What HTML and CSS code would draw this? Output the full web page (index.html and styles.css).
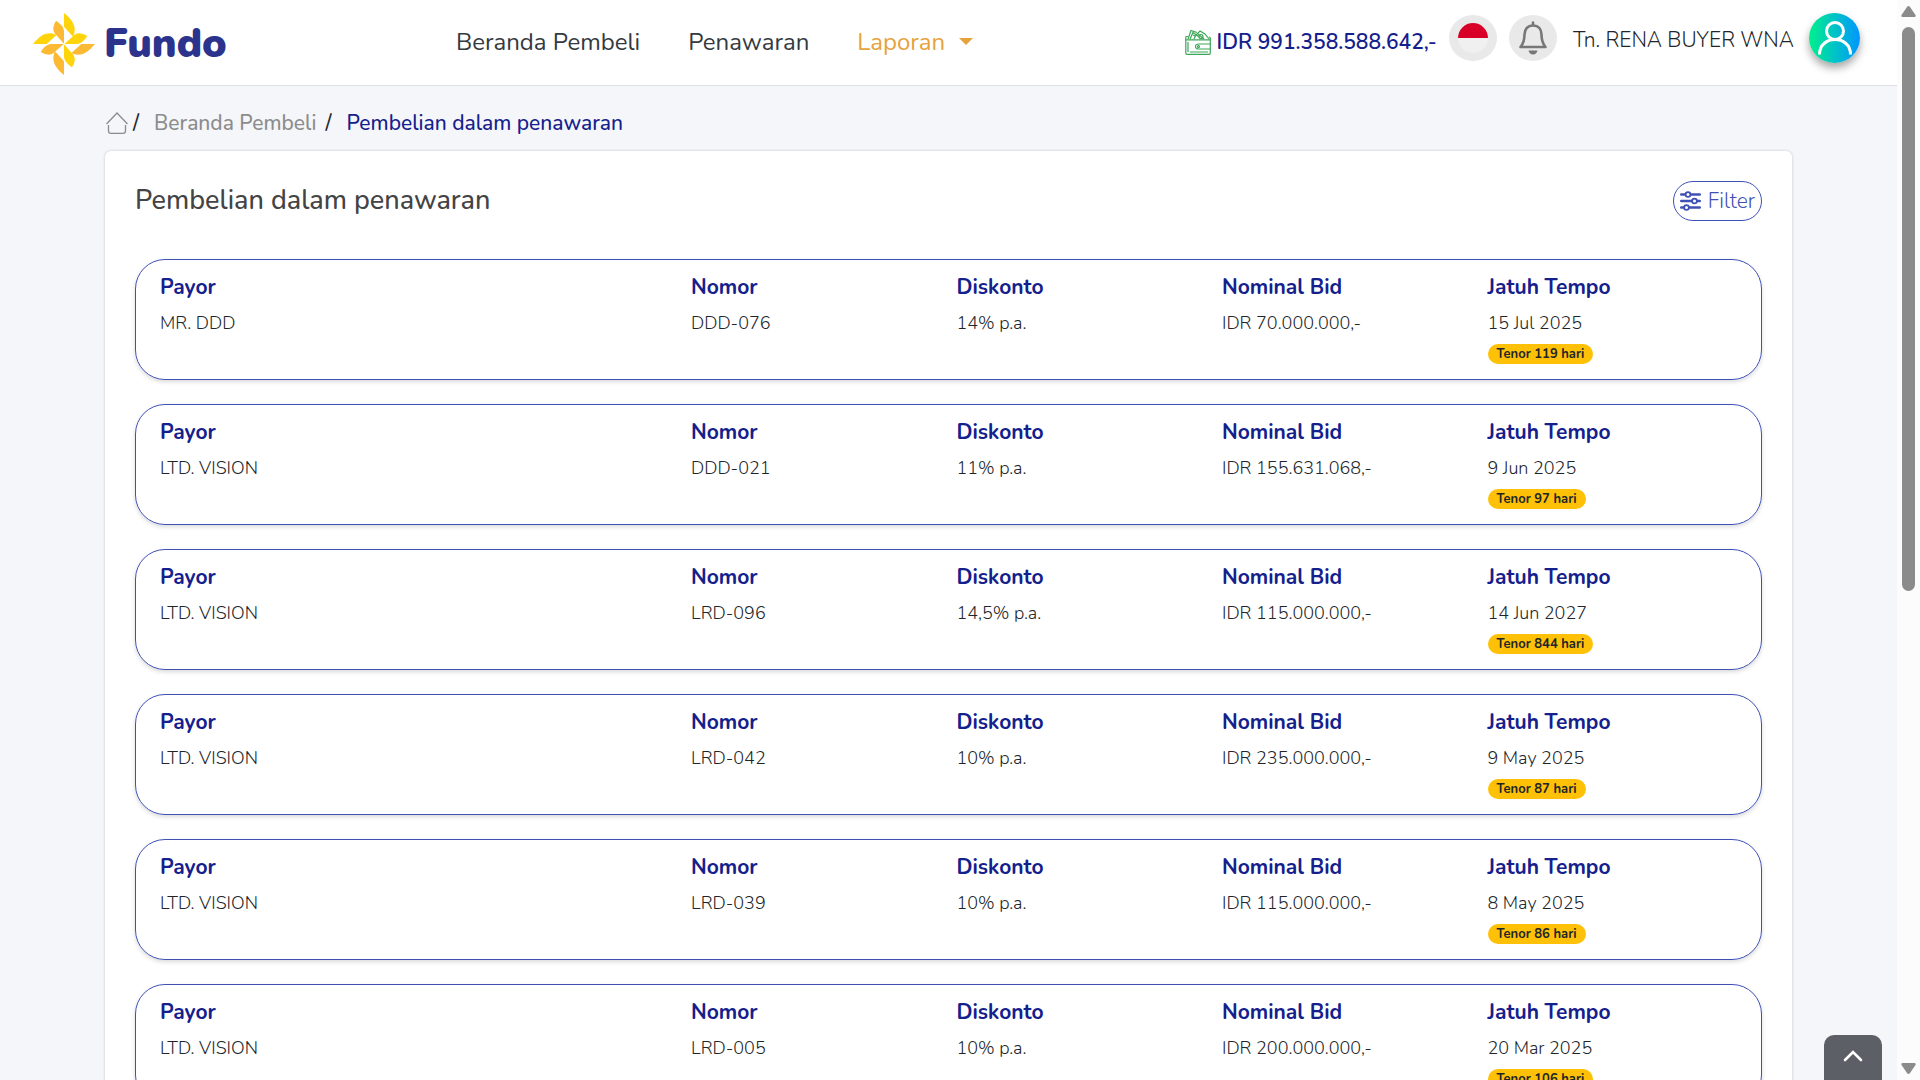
FILE: index.html
```html
<!DOCTYPE html>
<html lang="id">
<head>
<meta charset="utf-8">
<meta name="viewport" content="width=device-width, initial-scale=1">
<title>Fundo - Pembelian dalam penawaran</title>
<link rel="stylesheet" href="styles.css">
</head>
<body>
<header class="topbar">
  <a class="brand" href="#">
    <svg class="brand-mark" viewBox="-93 -93 186 186" aria-hidden="true">
      <defs>
        <path id="outer" d="M0-93C20-76 32-62 32-42Q32-30 27-22L0-52Z"/>
        <path id="inner" d="M-24-70Q-2-56 0-40V-1L-28-32Q-38-48-24-70Z"/>
      </defs>
      <g fill="#ffd40a">
        <use href="#outer"/>
        <use href="#outer" transform="rotate(-90)"/>
        <use href="#inner" transform="rotate(90)"/>
        <use href="#inner" transform="rotate(180)"/>
      </g>
      <g fill="#fbb934">
        <use href="#inner"/>
        <use href="#inner" transform="rotate(-90)"/>
        <use href="#outer" transform="rotate(90)"/>
        <use href="#outer" transform="rotate(180)"/>
      </g>
    </svg>
    <span class="brand-name">Fundo</span>
  </a>
  <nav class="menu">
    <a href="#">Beranda Pembeli</a>
    <a href="#">Penawaran</a>
    <a class="active" href="#">Laporan <span class="caret"></span></a>
  </nav>
  <div class="account">
    <a class="balance" href="#">
      <svg class="wallet" viewBox="0 0 26 26" fill="none" stroke="#3aa757" stroke-width="1.2" aria-hidden="true">
        <path d="M3 10 6 1.500 12 3.500M5 10 8 3.500 14 8M9 10 11 6 15 2 20 5 24 10M13 5 19 10M8 6l2 1"/>
        <circle cx="16" cy="7.500" r="2"/>
        <path d="M3 7.500H1.500Q.8 7.500.8 9V24Q.8 25.300 2 25.300H24Q25.300 25.300 25.300 24V9Q25.300 8 24 8M.8 10.800H25M25 15H14Q10.500 15 10.500 17.500T14 20H25M3 13v10M5 23H23"/>
        <circle cx="13.500" cy="17.500" r="1"/>
      </svg>
      <span>IDR 991.358.588.642,-</span>
    </a>
    <div class="user">
      <button class="round" type="button" aria-label="Bahasa Indonesia">
        <svg class="flag" viewBox="0 0 30 30" aria-hidden="true"><circle cx="15" cy="15" r="15" fill="#f0f0f0"/><path d="M0 15a15 15 0 0 1 30 0Z" fill="#d80027"/></svg>
      </button>
      <button class="round" type="button" aria-label="Notifikasi">
        <svg class="bell" viewBox="0 0 30 34" aria-hidden="true">
          <path d="M15 4.500C9.500 4.500 6.500 8.500 6.500 13.500C6.500 20 5 23 2.500 26H27.500C25 23 23.500 20 23.500 13.500C23.500 8.500 20.500 4.500 15 4.500ZM15 1.500V4" fill="none" stroke="#777" stroke-width="2.600" stroke-linejoin="round" stroke-linecap="round"/>
          <path d="M10.500 29.500H19.500Q18.500 33.500 15 33.500T10.500 29.500Z" fill="#777"/>
        </svg>
      </button>
      <span class="user-name">Tn. RENA BUYER WNA</span>
      <button class="avatar" type="button" aria-label="Profil">
        <svg viewBox="0 0 34 34" fill="none" stroke="#fff" stroke-width="3" aria-hidden="true"><circle cx="17" cy="10" r="8.500"/><path d="M1.500 33.500C1.500 13.500 32.500 13.500 32.500 33.500"/></svg>
      </button>
    </div>
  </div>
</header>

<main class="page">
  <nav class="crumbs" aria-label="Breadcrumb">
    <a href="#" aria-label="Beranda"><svg class="home" viewBox="0 0 22 22" fill="none" stroke="#8c8c8c" stroke-width="1.300" aria-hidden="true"><path d="M.5 12 11 1 21.500 12M2.500 13V19Q2.500 21.300 5 21.300H17Q19.500 21.300 19.500 19V13"/></svg></a>
    <span>/</span>
    <a class="crumb" href="#">Beranda Pembeli</a>
    <span>/</span>
    <a class="crumb current" href="#" aria-current="page">Pembelian dalam penawaran</a>
  </nav>

  <section class="card">
    <div class="card-head">
      <h1>Pembelian dalam penawaran</h1>
      <button class="filter" type="button">
        <svg viewBox="0 0 21 20" fill="none" stroke="#3f51b5" stroke-width="2.400" stroke-linecap="round" aria-hidden="true"><path d="M1.200 3.500H19.800M1.200 10H19.800M1.200 16.500H19.800"/><g fill="#fff" stroke-width="1.800"><circle cx="8" cy="3.500" r="2.400"/><circle cx="14.500" cy="10" r="2.400"/><circle cx="6.500" cy="16.500" r="2.400"/></g></svg>
        Filter
      </button>
    </div>
    <ul class="offers">
      <li><dl class="offer">
        <div><dt>Payor</dt><dd>MR. DDD</dd></div>
        <div><dt>Nomor</dt><dd>DDD-076</dd></div>
        <div><dt>Diskonto</dt><dd>14% p.a.</dd></div>
        <div><dt>Nominal Bid</dt><dd>IDR 70.000.000,-</dd></div>
        <div><dt>Jatuh Tempo</dt><dd>15 Jul 2025</dd><dd class="badge">Tenor 119 hari</dd></div>
      </dl></li>
      <li><dl class="offer">
        <div><dt>Payor</dt><dd>LTD. VISION</dd></div>
        <div><dt>Nomor</dt><dd>DDD-021</dd></div>
        <div><dt>Diskonto</dt><dd>11% p.a.</dd></div>
        <div><dt>Nominal Bid</dt><dd>IDR 155.631.068,-</dd></div>
        <div><dt>Jatuh Tempo</dt><dd>9 Jun 2025</dd><dd class="badge">Tenor 97 hari</dd></div>
      </dl></li>
      <li><dl class="offer">
        <div><dt>Payor</dt><dd>LTD. VISION</dd></div>
        <div><dt>Nomor</dt><dd>LRD-096</dd></div>
        <div><dt>Diskonto</dt><dd>14,5% p.a.</dd></div>
        <div><dt>Nominal Bid</dt><dd>IDR 115.000.000,-</dd></div>
        <div><dt>Jatuh Tempo</dt><dd>14 Jun 2027</dd><dd class="badge">Tenor 844 hari</dd></div>
      </dl></li>
      <li><dl class="offer">
        <div><dt>Payor</dt><dd>LTD. VISION</dd></div>
        <div><dt>Nomor</dt><dd>LRD-042</dd></div>
        <div><dt>Diskonto</dt><dd>10% p.a.</dd></div>
        <div><dt>Nominal Bid</dt><dd>IDR 235.000.000,-</dd></div>
        <div><dt>Jatuh Tempo</dt><dd>9 May 2025</dd><dd class="badge">Tenor 87 hari</dd></div>
      </dl></li>
      <li><dl class="offer">
        <div><dt>Payor</dt><dd>LTD. VISION</dd></div>
        <div><dt>Nomor</dt><dd>LRD-039</dd></div>
        <div><dt>Diskonto</dt><dd>10% p.a.</dd></div>
        <div><dt>Nominal Bid</dt><dd>IDR 115.000.000,-</dd></div>
        <div><dt>Jatuh Tempo</dt><dd>8 May 2025</dd><dd class="badge">Tenor 86 hari</dd></div>
      </dl></li>
      <li><dl class="offer">
        <div><dt>Payor</dt><dd>LTD. VISION</dd></div>
        <div><dt>Nomor</dt><dd>LRD-005</dd></div>
        <div><dt>Diskonto</dt><dd>10% p.a.</dd></div>
        <div><dt>Nominal Bid</dt><dd>IDR 200.000.000,-</dd></div>
        <div><dt>Jatuh Tempo</dt><dd>20 Mar 2025</dd><dd class="badge">Tenor 106 hari</dd></div>
      </dl></li>
    </ul>
  </section>
</main>

<button class="to-top" type="button" aria-label="Kembali ke atas">
  <svg viewBox="0 0 20 12" fill="none" stroke="#fff" stroke-width="2.600" stroke-linecap="round" aria-hidden="true"><path d="M2 10 10 2 18 10"/></svg>
</button>

<div class="scrollbar" aria-hidden="true">
  <svg viewBox="0 0 15 11" fill="#8b8b8b"><path d="M6 1Q7.500-1 9 1L14.500 9Q15 11 13.500 11H1.500Q0 11 .5 9Z"/></svg>
  <div class="track"><div class="thumb"></div></div>
  <svg viewBox="0 0 15 11" fill="#8b8b8b"><path d="M6 10Q7.500 12 9 10L14.500 2Q15 0 13.500 0H1.500Q0 0 .5 2Z"/></svg>
</div>
</body>
</html>
```
FILE: styles.css
```css
* {
  box-sizing: border-box;
}

html {
  height: 100%;
  overflow: hidden;
}

body {
  height: 100%;
  margin: 0;
  padding-right: 23px;
  overflow: hidden;
  background: #f4f6fa;
  color: #212529;
  font-family: Nunito, "Open Sans", "Noto Sans", sans-serif;
  font-size: 18px;
  font-weight: 300;
}

a {
  color: inherit;
  text-decoration: none;
}

button {
  border: 0;
  padding: 0;
  background: none;
  font: inherit;
  cursor: pointer;
}

svg {
  display: block;
}

/* Top bar */
.topbar {
  display: flex;
  align-items: center;
  height: 86px;
  padding: 0 37px 2px 33px;
  border-bottom: 1px solid #dcdfe5;
  background: #fff;
}

.brand {
  display: flex;
  align-items: center;
  gap: 9px;
  width: 423px;
  padding-top: 4px;
}

.brand-mark {
  width: 62px;
  height: 62px;
}

.brand-name {
  color: #2b338c;
  font-size: 41px;
  font-weight: 900;
  line-height: 48px;
}

.menu {
  display: flex;
  gap: 48px;
  font-size: 24px;
  font-weight: 400;
  line-height: 32px;
  color: #343a40;
  white-space: nowrap;
}

.menu .active {
  display: flex;
  align-items: center;
  gap: 14px;
  color: #e6a23c;
}

.caret {
  border: 7px solid transparent;
  border-top-color: currentColor;
  border-bottom: 0;
}

.account {
  display: flex;
  align-items: center;
  gap: 12px;
  margin-left: auto;
  white-space: nowrap;
}

.balance {
  display: flex;
  align-items: center;
  gap: 6px;
  color: #14208c;
  font-size: 21px;
  font-weight: 600;
  line-height: 32px;
}

.wallet {
  width: 26px;
  height: 26px;
}

.user {
  display: flex;
  align-items: center;
  gap: 12px;
  padding-bottom: 8px;
}

.round {
  display: grid;
  place-items: center;
  width: 48px;
  height: 46px;
  border-radius: 50%;
  background: #e9e9e9;
}

.flag {
  width: 30px;
  height: 30px;
}

.bell {
  width: 30px;
  height: 34px;
}

.user-name {
  padding: 4px 3px 0 4px;
  font-size: 21px;
  line-height: 32px;
}

.avatar {
  display: grid;
  place-items: center;
  width: 51px;
  height: 50px;
  border-radius: 50%;
  background: linear-gradient(90deg, #00f08c, #0096ff);
  box-shadow: 0 5px 8px rgba(0, 0, 0, 0.35);
}

.avatar svg {
  width: 34px;
  height: 34px;
}

/* Page */
.page {
  padding: 23px 105px 30px;
}

.crumbs {
  display: flex;
  align-items: center;
  gap: 9px;
  margin-bottom: 14px;
  padding-left: 1px;
  font-size: 21px;
  font-weight: 500;
  line-height: 28px;
}

.crumbs > a:first-child {
  margin-right: -4px;
}

.home {
  width: 22px;
  height: 22px;
}

.crumb {
  margin-left: 6px;
  color: #8c8c8c;
}

.crumb.current {
  color: #14208c;
}

.card {
  padding: 30px;
  border-radius: 6px;
  background: #fff;
  box-shadow: 0 0 3px rgba(0, 0, 0, 0.2);
}

.card-head {
  display: flex;
  align-items: center;
  justify-content: space-between;
  margin-bottom: 38px;
}

.card-head h1 {
  margin: 0;
  color: #444;
  font-size: 27px;
  font-weight: 500;
  line-height: 40px;
}

.filter {
  display: flex;
  align-items: center;
  gap: 7px;
  height: 40px;
  padding: 0 6px;
  border: 1px solid #3f51b5;
  border-radius: 20px;
  color: #3f51b5;
  font-size: 21px;
}

.filter svg {
  width: 21px;
  height: 20px;
}

.offers {
  display: grid;
  gap: 24px;
  margin: 0;
  padding: 0;
  list-style: none;
}

.offer {
  display: grid;
  grid-template-columns: 2fr 1fr 1fr 1fr 1fr;
  margin: 0;
  padding: 15px 16px;
  border: 1px solid #3f51b5;
  border-radius: 30px;
  box-shadow: 0 2px 4px rgba(0, 0, 0, 0.15);
  line-height: 24px;
}

.offer > div {
  padding: 0 8px;
}

.offer dt {
  margin-bottom: 12px;
  color: #14208c;
  font-size: 21px;
  font-weight: 700;
}

.offer dd {
  margin: 0;
}

.offer .badge {
  width: fit-content;
  margin-top: 9px;
  padding: 0 9px;
  border-radius: 10px;
  background: #ffc107;
  font-size: 13px;
  font-weight: 700;
  line-height: 20px;
}

/* Floating controls */
.to-top {
  position: fixed;
  right: 38px;
  bottom: 0;
  display: grid;
  justify-items: center;
  width: 58px;
  height: 45px;
  padding-top: 15px;
  border-radius: 10px 10px 0 0;
  background: #5c6066;
}

.to-top svg {
  width: 20px;
  height: 12px;
}

.scrollbar {
  position: fixed;
  top: 0;
  right: 0;
  bottom: 0;
  display: flex;
  flex-direction: column;
  align-items: center;
  gap: 10px;
  width: 23px;
  padding: 6px 0;
  background: #fcfcfc;
}

.scrollbar svg {
  width: 15px;
  height: 11px;
}

.track {
  flex: 1;
  width: 13px;
}

.thumb {
  height: 55%;
  border-radius: 7px;
  background: #8b8b8b;
}
```
